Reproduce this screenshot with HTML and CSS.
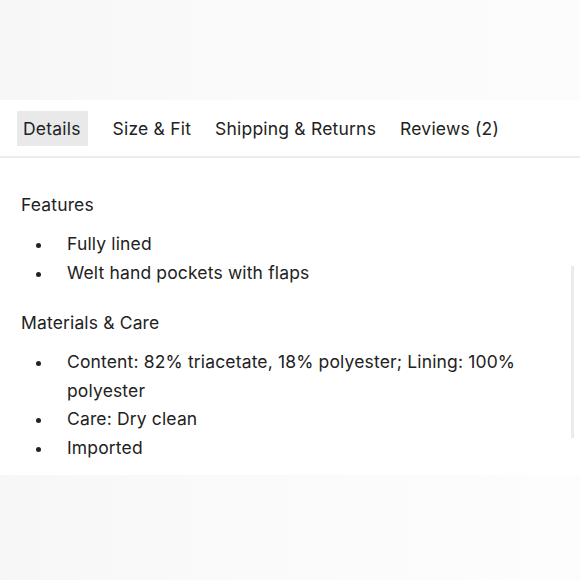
FILE: index.html
```html
<!DOCTYPE html>
<html>
<head>
<meta charset="utf-8">
<link rel="stylesheet" href="styles.css">
</head>
<body>
<div class="page">
  <div class="band-top"></div>
  <nav class="tabs">
    <span class="tab active">Details</span>
    <span class="tab">Size &amp; Fit</span>
    <span class="tab">Shipping &amp; Returns</span>
    <span class="tab">Reviews (2)</span>
  </nav>
  <section class="panel">
    <div class="content">
      <h3 class="heading">Features</h3>
      <ul class="list">
        <li>Fully lined</li>
        <li>Welt hand pockets with flaps</li>
      </ul>
      <h3 class="heading">Materials &amp; Care</h3>
      <ul class="list">
        <li>Content: 82% triacetate, 18% polyester; Lining: 100% polyester</li>
        <li>Care: Dry clean</li>
        <li>Imported</li>
      </ul>
    </div>
    <div class="scrollbar"></div>
  </section>
  <div class="band-bottom"></div>
</div>
</body>
</html>
```

FILE: styles.css
```css
html, body {
  margin: 0;
  padding: 0;
  background: #ffffff;
}
body {
  font-family: "Inter", "Liberation Sans", sans-serif;
  color: #222222;
  width: 580px;
  height: 580px;
  overflow: hidden;
}
.page {
  display: flex;
  flex-direction: column;
  height: 580px;
}
.band-top {
  height: 100px;
  background: linear-gradient(90deg, #f7f7f7 0%, #fafafa 40%, #fcfcfc 100%);
}
.tabs {
  display: flex;
  align-items: center;
  gap: 12px;
  height: 56px;
  padding-left: 17px;
  border-bottom: 2px solid #ececec;
}
.tab {
  font-size: 17.5px;
  letter-spacing: 0.2px;
  line-height: 34px;
  padding: 1px 6px 0;
  color: #222;
}
.tab.active {
  background: #e9e9e9;
  padding: 1px 7px 0 6px;
  margin-right: 7px;
}
.panel {
  display: flex;
  height: 317px;
}
.content {
  flex: 1;
  padding: 35px 0 0 21px;
}
.heading {
  margin: 0;
  font-weight: 400;
  font-size: 17.5px;
  letter-spacing: 0.15px;
  line-height: 24px;
}
.list {
  margin: 13px 0 24px;
  padding-left: 46px;
  font-size: 17.5px;
  letter-spacing: 0.15px;
  line-height: 28.5px;
  list-style: none;
}
.list li {
  position: relative;
  padding-right: 50px;
}
.list li::before {
  content: "";
  position: absolute;
  left: -31px;
  top: 13px;
  width: 5px;
  height: 5px;
  border-radius: 50%;
  background: #222;
}
.scrollbar {
  width: 3px;
  margin: 108px 6px 0 0;
  height: 172px;
  background: #ebebeb;
}
.band-bottom {
  flex: 1;
  background: linear-gradient(90deg, #f7f7f7 0%, #fafafa 40%, #fdfdfd 100%);
}
```
